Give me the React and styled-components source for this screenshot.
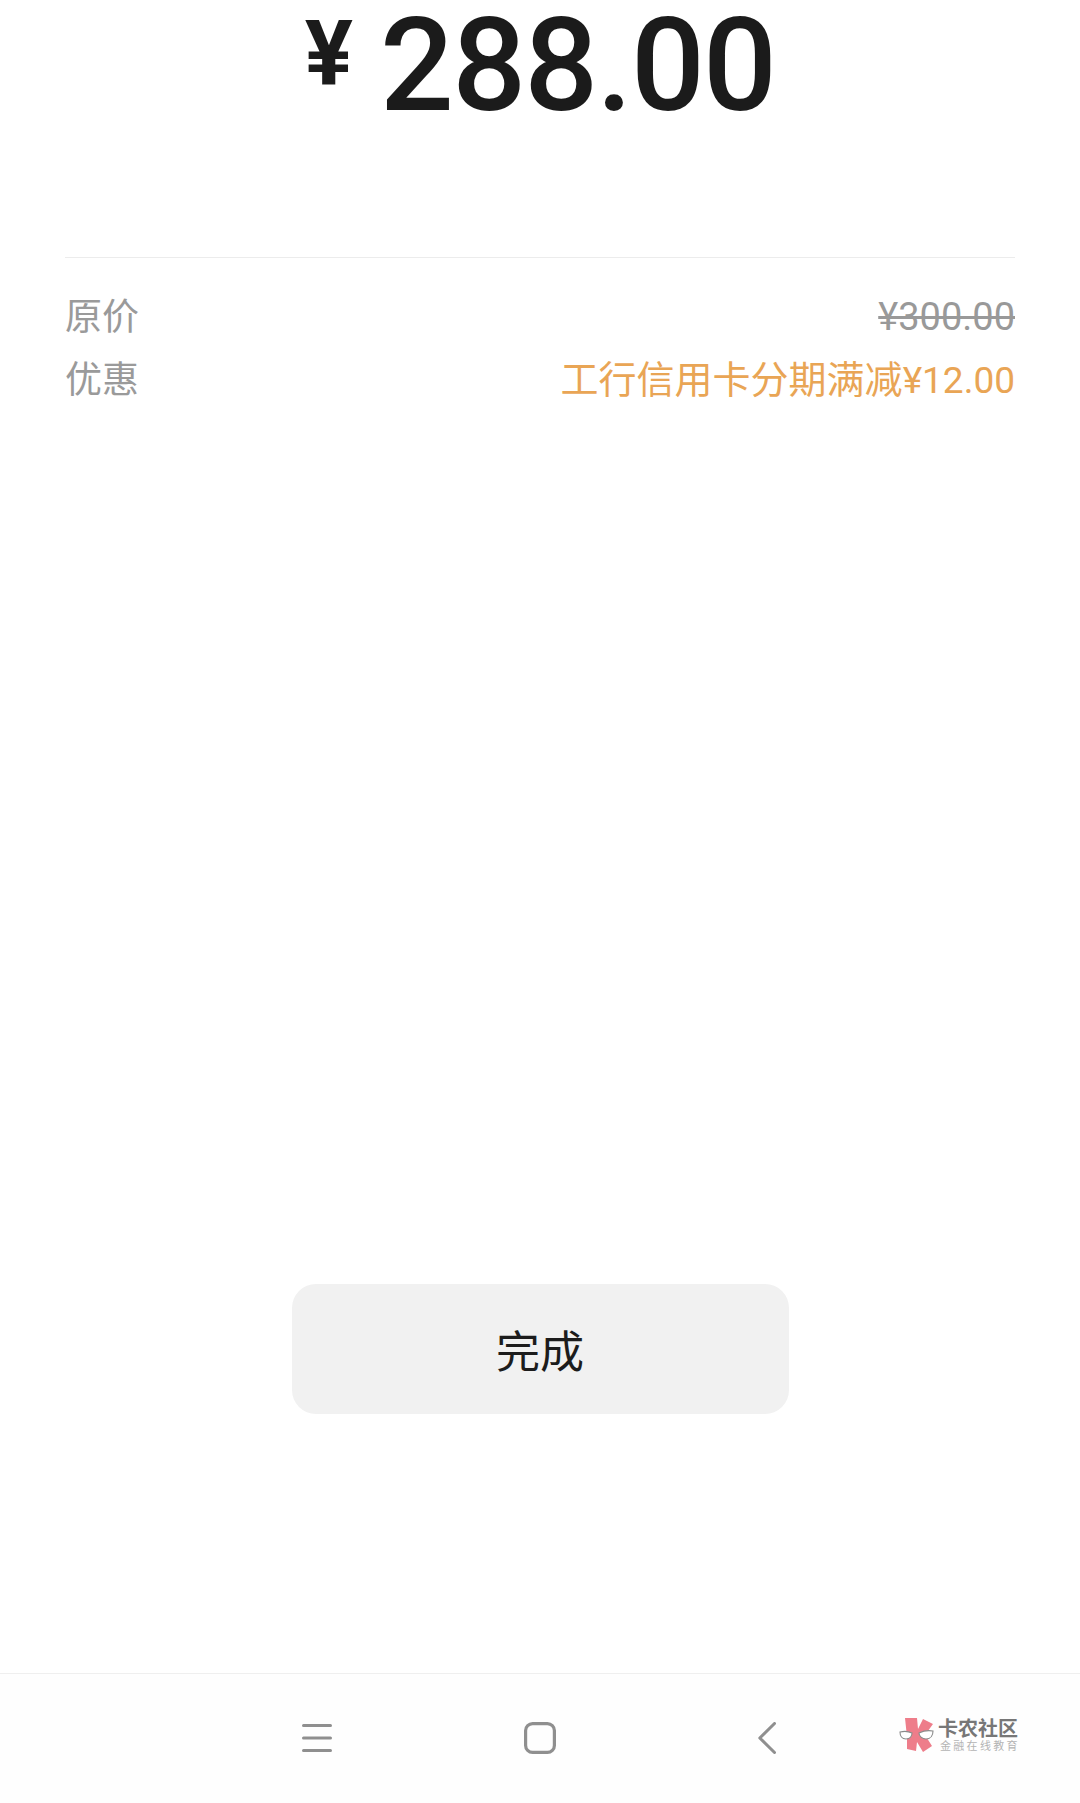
import styled, { createGlobalStyle } from "styled-components";

const GlobalStyle = createGlobalStyle`
  html, body {
    margin: 0;
    padding: 0;
    background: #ffffff;
  }
`;

const CJK = `Roboto, "Noto Sans CJK SC", sans-serif`;

const App = () => {
  return (
    <Page>
      <GlobalStyle />
      <Main>
        <Amount>
          <Currency>¥</Currency>
          <Value>288.00</Value>
        </Amount>
        <Details>
          <Row>
            <Label>原价</Label>
            <Original>¥300.00</Original>
          </Row>
          <Row>
            <Label>优惠</Label>
            <Discount>
              工行信用卡分期满减<DiscountPrice>¥12.00</DiscountPrice>
            </Discount>
          </Row>
        </Details>
        <DoneButton>完成</DoneButton>
      </Main>
      <NavBar>
        <NavItem>
          <MenuIcon />
        </NavItem>
        <NavItem $offset={192}>
          <HomeIcon />
        </NavItem>
        <NavItem $offset={202}>
          <BackIcon />
        </NavItem>
        <Watermark>
          <LogoMark />
          <WatermarkText>
            <WatermarkName>卡农社区</WatermarkName>
            <WatermarkSlogan>金融在线教育</WatermarkSlogan>
          </WatermarkText>
        </Watermark>
      </NavBar>
    </Page>
  );
};

export default App;

const MenuIcon = () => (
  <svg width="30" height="30" viewBox="0 0 30 30" fill="none" stroke="#8f8f8f" strokeWidth="3" strokeLinecap="round">
    <path d="M1.5 2.5h27M1.5 15h27M1.5 27.5h27" />
  </svg>
);

const HomeIcon = () => (
  <svg width="32" height="32" viewBox="0 0 32 32" fill="none" stroke="#8f8f8f" strokeWidth="3.2">
    <rect x="1.6" y="1.6" width="28.8" height="28.8" rx="7" />
  </svg>
);

const BackIcon = () => (
  <svg width="18" height="32" viewBox="0 0 18 32" fill="none" stroke="#8f8f8f" strokeWidth="3" strokeLinecap="round" strokeLinejoin="round">
    <path d="M16.5 1.5 1.8 16 16.5 30.5" />
  </svg>
);

const LogoMark = () => (
  <svg width="36" height="36" viewBox="0 0 36 36">
    <path d="M6 1H18L19 12 24 2 34 7 26 18 33 29 24 35 18 25 17 34 8 32 8 20Z" fill="#ee7d8a" />
    <g fill="#fff" stroke="#8a8a8a" strokeWidth="1.1">
      <path d="M1 15c4-1 8-1 12 1 0 3-2 6-6 6-4 0-6-3-6-7z" />
      <path d="M20 16c4-2 9-3 14-2 0 4-2 8-7 8-4 0-7-3-7-6z" />
    </g>
  </svg>
);

// Styled Components

const Page = styled.div`
  display: flex;
  flex-direction: column;
  height: 1803px;
  overflow: hidden;
  background: #ffffff;
  font-family: ${CJK};
`;

const Main = styled.main`
  flex: 1;
  display: flex;
  flex-direction: column;
  padding: 0 65px;
`;

const Amount = styled.div`
  height: 258px;
  box-sizing: border-box;
  border-bottom: 1px solid #ececec;
  display: flex;
  justify-content: center;
  align-items: flex-start;
  gap: 27px;
  color: #1b1b1b;
`;

const Currency = styled.span`
  font-size: 90px;
  font-weight: 700;
  line-height: 110px;
`;

const Value = styled.span`
  font-size: 130px;
  font-weight: 500;
  letter-spacing: -1.7px;
  line-height: 132px;
`;

const Details = styled.div`
  display: flex;
  flex-direction: column;
  gap: 16px;
  padding-top: 29px;
`;

const Row = styled.div`
  display: flex;
  justify-content: space-between;
  align-items: baseline;
  height: 46px;
`;

const Label = styled.span`
  color: #9a9a9a;
  font-size: 37px;
`;

const Original = styled.span`
  color: #999999;
  font-size: 38px;
  text-decoration: line-through;
`;

const Discount = styled.span`
  color: #e9a555;
  font-size: 38px;
`;

const DiscountPrice = styled.span`
  font-size: 37px;
`;

const DoneButton = styled.button`
  align-self: center;
  width: 497px;
  height: 130px;
  margin-top: 889px;
  border: 0;
  border-radius: 24px;
  background: #f1f1f1;
  color: #1c1c1c;
  font-family: ${CJK};
  font-size: 44px;
`;

const NavBar = styled.nav`
  position: relative;
  display: flex;
  align-items: center;
  height: 130px;
  box-sizing: border-box;
  padding: 0 0 2px 302px;
  border-top: 1px solid #efefef;
  background: #fefefe;
`;

const NavItem = styled.div`
  display: flex;
  margin-left: ${({ $offset }) => $offset || 0}px;
`;

const Watermark = styled.div`
  position: absolute;
  left: 899px;
  top: 43px;
  display: flex;
  align-items: center;
  gap: 3px;
`;

const WatermarkText = styled.div`
  display: flex;
  flex-direction: column;
`;

const WatermarkName = styled.span`
  font-size: 20px;
  font-weight: 700;
  line-height: 22px;
  color: #777777;
`;

const WatermarkSlogan = styled.span`
  font-size: 11px;
  line-height: 13px;
  letter-spacing: 2.3px;
  margin-left: 2px;
  color: #b4b4b4;
`;
